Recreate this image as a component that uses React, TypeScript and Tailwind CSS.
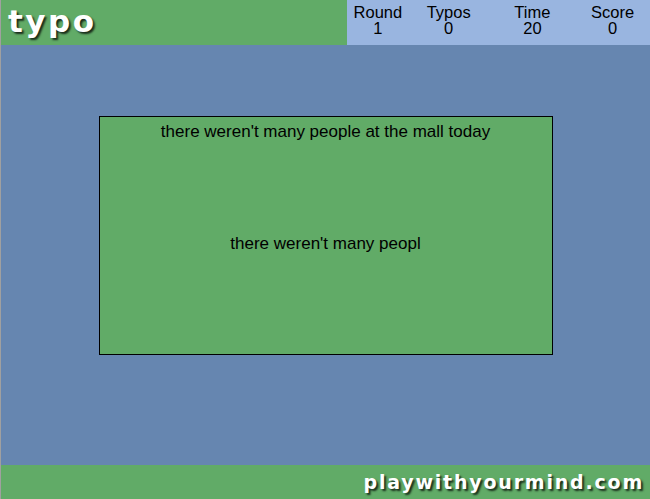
import React from 'react';

const stats = [
  { label: 'Round', value: '1', width: 'w-[60px]' },
  { label: 'Typos', value: '0', width: 'w-[82px]' },
  { label: 'Time', value: '20', width: 'w-[86px]' },
  { label: 'Score', value: '0', width: 'w-[75px]' },
];

const App: React.FC = () => {
  const target = "there weren't many people at the mall today";
  const typed = "there weren't many peopl";

  return (
    <div className="flex h-[499px] w-[650px] flex-col border-l border-[#a0a0a0] bg-[#6686b0] font-['Liberation_Sans',Arial,sans-serif] text-black">
      <header className="flex h-[45px] shrink-0">
        <div className="flex flex-1 items-start bg-[#61ab67] pl-[7px]">
          <h1 className="mt-[-2px] font-['DejaVu_Sans',Verdana,sans-serif] text-[31px] font-bold tracking-[2.5px] text-white [text-shadow:2px_2px_2px_rgba(0,0,0,0.75)]">
            typo
          </h1>
        </div>
        <div className="flex w-[303px] bg-[#99b5e0] pl-[1px] pt-[4px]">
          {stats.map(s => (
            <div key={s.label} className={`${s.width} text-center text-[16.5px] leading-[16px]`}>
              <div>{s.label}</div>
              <div>{s.value}</div>
            </div>
          ))}
        </div>
      </header>

      <main className="flex flex-1 justify-center">
        <div className="mt-[71px] flex h-[239px] w-[454px] flex-col items-center border border-black bg-[#61ab67] text-[17px] leading-[19px]">
          <p className="mt-[5px]">{target}</p>
          <p className="mt-[93px]">{typed}</p>
        </div>
      </main>

      <footer className="flex h-[34px] shrink-0 items-center justify-end bg-[#61ab67] pr-[6px]">
        <span className="font-['DejaVu_Sans',Verdana,sans-serif] text-[19px] font-bold tracking-[1.8px] text-white [text-shadow:2px_2px_2px_rgba(0,0,0,0.75)]">
          playwithyourmind.com
        </span>
      </footer>
    </div>
  );
};

export default App;
